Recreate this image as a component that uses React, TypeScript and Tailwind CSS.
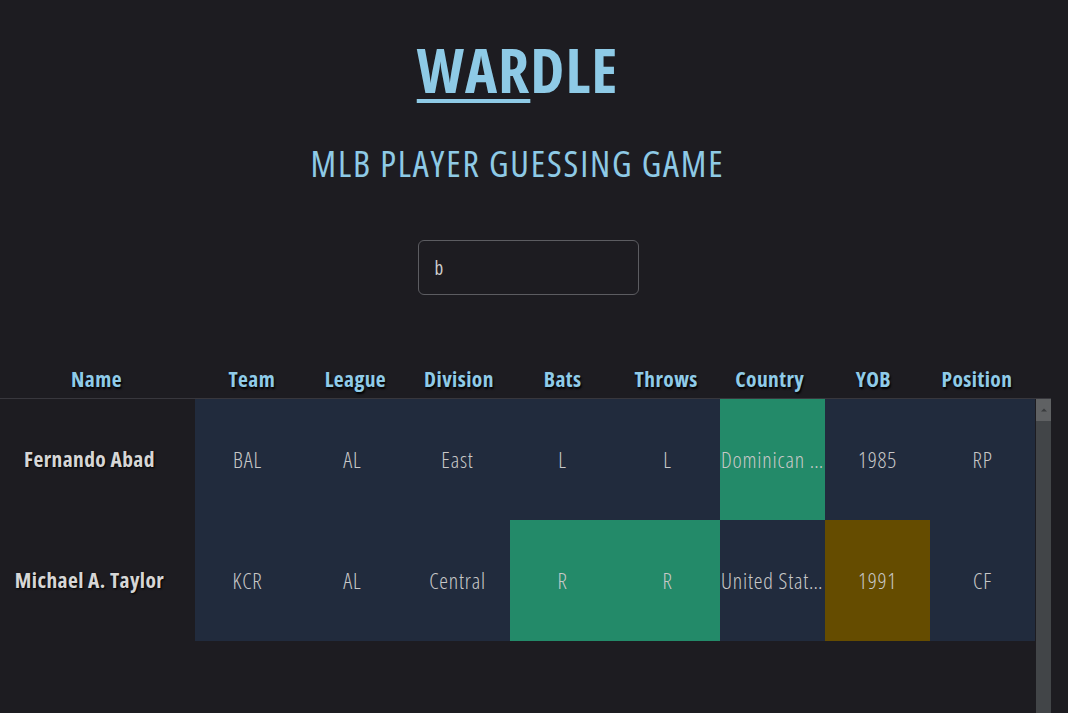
import { ChevronUp } from 'lucide-react'

type Hint = 'none' | 'green' | 'gold'

interface Cell {
  value: string
  hint: Hint
}

interface Guess {
  name: string
  cells: Cell[]
}

const columns = ['Team', 'League', 'Division', 'Bats', 'Throws', 'Country', 'YOB', 'Position']

const guesses: Guess[] = [
  {
    name: 'Fernando Abad',
    cells: [
      { value: 'BAL', hint: 'none' },
      { value: 'AL', hint: 'none' },
      { value: 'East', hint: 'none' },
      { value: 'L', hint: 'none' },
      { value: 'L', hint: 'none' },
      { value: 'Dominican Republic', hint: 'green' },
      { value: '1985', hint: 'none' },
      { value: 'RP', hint: 'none' },
    ],
  },
  {
    name: 'Michael A. Taylor',
    cells: [
      { value: 'KCR', hint: 'none' },
      { value: 'AL', hint: 'none' },
      { value: 'Central', hint: 'none' },
      { value: 'R', hint: 'green' },
      { value: 'R', hint: 'green' },
      { value: 'United States', hint: 'none' },
      { value: '1991', hint: 'gold' },
      { value: 'CF', hint: 'none' },
    ],
  },
]

const hintBg: Record<Hint, string> = {
  none: 'bg-[#212b3d]',
  green: 'bg-[#238a69]',
  gold: 'bg-[#654c00]',
}

function GuessRow({ guess }: { guess: Guess }) {
  return (
    <div className="flex h-[121px]">
      <div className="w-[195px] shrink-0 flex items-center justify-center pr-[16px] font-bold text-[21.5px] tracking-[0.4px] text-[#d6d6d6] [text-shadow:1px_1px_2px_#000]">
        {guess.name}
      </div>
      {guess.cells.map((cell, i) => (
        <div
          key={`${guess.name}-${i}`}
          className={`w-[105px] shrink-0 flex items-center justify-center font-light text-[22px] tracking-[0.8px] text-[#c8c8c8] ${hintBg[cell.hint]}`}
        >
          <span className="block max-w-full truncate px-[1px]">{cell.value}</span>
        </div>
      ))}
    </div>
  )
}

export default function App() {
  return (
    <div className="min-h-screen bg-[#1d1c21] overflow-hidden">
      <div
        className="w-[1051px] flex flex-col items-center font-stretch-[75%]"
        style={{ fontFamily: '"Open Sans", "Noto Sans", sans-serif' }}
      >
        <h1 className="mt-[30px] mr-[16px] text-[61px] leading-[80px] font-bold tracking-[1px] text-[#8ecae6]">
          <span className="underline decoration-[4px] underline-offset-[6px]">WAR</span>DLE
        </h1>

        <h2 className="mt-[29px] mr-[16px] text-[36px] leading-[50px] tracking-[1.8px] text-[#8ecae6]">
          MLB PLAYER GUESSING GAME
        </h2>

        <input
          type="text"
          defaultValue="b"
          className="mt-[51px] ml-[5px] w-[221px] h-[55px] rounded-md border border-[#5c5c61] bg-transparent pl-[16px] text-[19px] text-[#cfcfcf] outline-none"
        />

        <div className="self-stretch mt-[65px]">
          <div className="flex h-[39px] items-center border-b border-[#38373d] font-bold text-[21.5px] tracking-[0.4px] text-[#8fcbe8] [text-shadow:1px_2px_2px_#000]">
            <div className="w-[200px] shrink-0 text-center pr-[7px]">Name</div>
            {columns.map((col) => (
              <div key={col} className="w-[103.6px] shrink-0 text-center">
                {col}
              </div>
            ))}
          </div>

          <div className="flex h-[320px]">
            <div className="w-[1036px]">
              {guesses.map((g) => (
                <GuessRow key={g.name} guess={g} />
              ))}
            </div>
            <div className="w-[15px] bg-[#424548] flex flex-col">
              <div className="h-[22px] bg-[#5f6163] flex items-center justify-center">
                <ChevronUp size={12} strokeWidth={0} fill="#3a3c3e" className="text-[#3a3c3e]" />
              </div>
            </div>
          </div>
        </div>
      </div>
    </div>
  )
}
